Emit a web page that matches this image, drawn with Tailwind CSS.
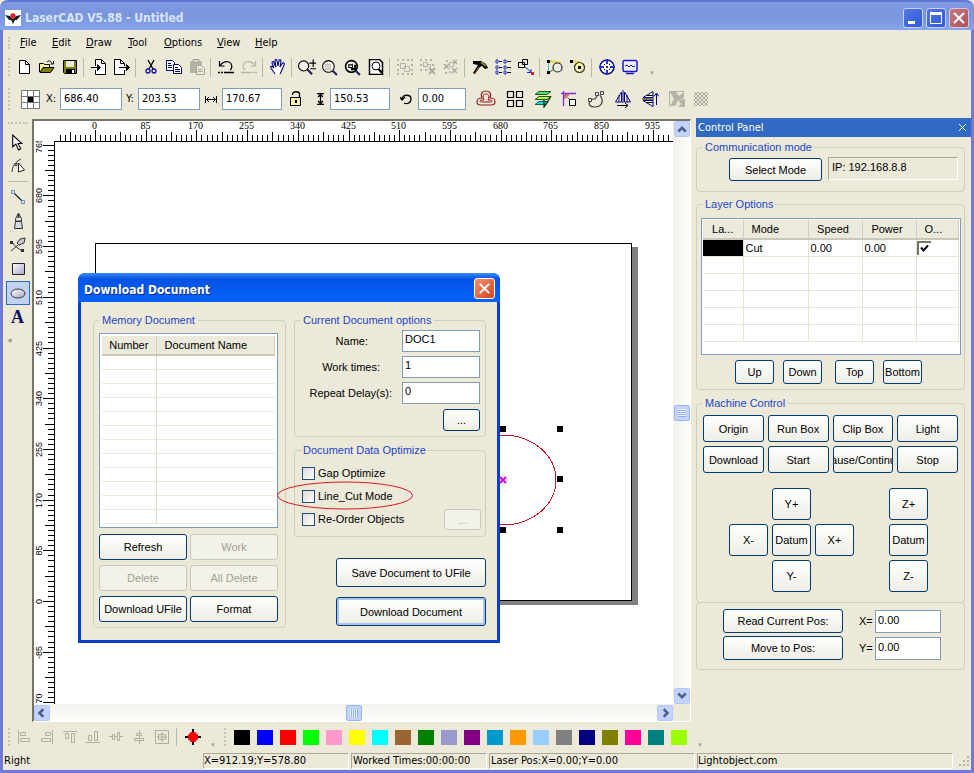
<!DOCTYPE html>
<html lang="en">
  <head>
    <meta charset="UTF-8" />
    <meta name="viewport" content="width=device-width, initial-scale=1.0" />
    <title>LaserCAD V5.88 - Untitled</title>
    <script src="https://cdn.jsdelivr.net/npm/@tailwindcss/browser@4"></script>
  </head>
  <body class="flex min-h-screen flex-col bg-[#ece9d8] font-['Liberation_Sans',sans-serif] text-[11px] leading-[14px] text-black">

    <!-- title bar -->
    <header class="flex h-[30px] shrink-0 items-center gap-1 rounded-t-lg border-t-2 border-[#6276d2] bg-linear-to-b from-[#7d99e2] via-[#7a95dd] to-[#86a6ec] pr-[5px] pl-[5px]">
      <svg class="mt-1 h-4 w-4 bg-white" viewBox="0 0 16 16"><path d="M0 5l5 1 3 3 3-3 5-1-4 5H10l-2 4-2-4H4z" fill="#102020"/><circle cx="8" cy="6" r="2.7" fill="#e32222"/></svg>
      <h1 class="mt-1 flex-1 font-['DejaVu_Sans_Condensed','DejaVu_Sans',sans-serif] text-[12px] font-bold whitespace-nowrap text-[#d8e4f8]">LaserCAD V5.88 - Untitled</h1>
      <div class="mt-1 flex gap-[3px]">
        <button aria-label="Minimize" class="flex h-5 w-5 items-center justify-center rounded-[3px] border border-[#c5d3f5] bg-linear-to-br from-[#5578e2] to-[#2f57d8]"><svg class="h-4 w-4" viewBox="0 0 16 16"><path d="M3 11h7v3H3z" fill="#fff"/></svg></button>
        <button aria-label="Maximize" class="flex h-5 w-5 items-center justify-center rounded-[3px] border border-[#c5d3f5] bg-linear-to-br from-[#5578e2] to-[#2f57d8]"><svg class="h-4 w-4 shrink-0" viewBox="0 0 16 16"><path d="M2 2h12v12H2zM3 5v8h10V5z" fill="#fff" fill-rule="evenodd"/></svg></button>
        <button aria-label="Close" class="flex h-5 w-5 items-center justify-center rounded-[3px] border border-[#d9c5dc] bg-linear-to-br from-[#c47a86] to-[#ae4f55]"><svg class="h-4 w-4" viewBox="0 0 16 16"><path d="M3 3l10 10M13 3L3 13" stroke="#fff" stroke-width="2"/></svg></button>
      </div>
    </header>

    <div class="flex flex-1 flex-col border-x-[3px] border-b-[3px] border-[#7078d8]">
      <!-- menu -->
      <nav class="flex h-6 items-center gap-4 pt-px pl-[5px] font-['DejaVu_Sans_Condensed','DejaVu_Sans',sans-serif] text-[11px]">
        <span class="-mr-[6px] h-3 border-l-2 border-dotted border-[#c5c2b2]"></span>
        <a href="#" class="w-4"><u>F</u>ile</a>
        <a href="#" class="w-[18px]"><u>E</u>dit</a>
        <a href="#" class="w-[26px]"><u>D</u>raw</a>
        <a href="#" class="w-5"><u>T</u>ool</a>
        <a href="#" class="w-[37px]"><u>O</u>ptions</a>
        <a href="#" class="w-[22px]"><u>V</u>iew</a>
        <a href="#"><u>H</u>elp</a>
      </nav>

      <!-- standard toolbar -->
      <div class="flex h-[26px] items-center pl-[5px]">
        <span class="mr-[2px] h-[18px] border-l-2 border-dotted border-[#c5c2b2]"></span>
        <button aria-label="New" class="flex w-[23px] justify-center"><svg class="h-4 w-4" viewBox="0 0 16 16"><path d="M3.500 1.500h6l4 4v9h-10zM9.500 1.500v4h4" fill="#fff" stroke="#000"/></svg></button>
        <button aria-label="Open" class="flex w-[23px] justify-center"><svg class="h-4 w-4" viewBox="0 0 16 16"><path d="M.5 13V4.500h4l1 1h5V8" fill="#ffff90" stroke="#000"/><path d="M1 13.500L4 8.500h11l-3.500 5z" fill="#808000" stroke="#000"/><path d="M8 3c2-2 4-1 5 1.500M14.500 2v3h-3" fill="none" stroke="#000"/></svg></button>
        <button aria-label="Save" class="flex w-[23px] justify-center"><svg class="h-4 w-4" viewBox="0 0 16 16"><path d="M1.500 1.500h13v13h-12l-1-1z" fill="#808000" stroke="#000"/><path d="M4 2h8v6H4z" fill="#ece9d8"/><path d="M4 10h9v4H4z"/><path d="M10 11h2v3h-2z" fill="#fff"/></svg></button>
        <span class="mx-[2px] h-[19px] w-[2px] border-l border-[#b9b7a8]"></span>
        <button aria-label="Import" class="flex w-[23px] justify-center"><svg class="h-4 w-4" viewBox="0 0 16 16"><path d="M4.500 7V.5h6l4 4v11h-10V11M10.500.5v4h4" fill="#fff" stroke="#000"/><path d="M0 8.500h9M6.500 5.500l3 3-3 3z" fill="#000" stroke="#000"/></svg></button>
        <button aria-label="Export" class="flex w-[23px] justify-center"><svg class="h-4 w-4" viewBox="0 0 16 16"><path d="M10.500 11v4.500H.5V.5h6l4 4V7M6.500.5v4h4" fill="#fff" stroke="#000"/><path d="M5 8.500h9M12.500 5.500l3 3-3 3z" fill="#000" stroke="#000"/></svg></button>
        <span class="mx-[2px] h-[19px] w-[2px] border-l border-[#b9b7a8]"></span>
        <button aria-label="Cut" class="flex w-[23px] justify-center"><svg class="h-4 w-4" viewBox="0 0 16 16"><path d="M5 1l5 9M11 1L6 10" stroke="#000" stroke-width="1.300"/><circle cx="5" cy="12" r="2" fill="none" stroke="#1010a0" stroke-width="1.300"/><circle cx="11" cy="12" r="2" fill="none" stroke="#1010a0" stroke-width="1.300"/></svg></button>
        <button aria-label="Copy" class="flex w-[23px] justify-center"><svg class="h-4 w-4" viewBox="0 0 16 16"><path d="M.5 1.500h6l2 2v8h-8z" fill="#fff" stroke="#000080"/><path d="M2 4.500h3M2 6.500h4M2 8.500h4" stroke="#000080"/><path d="M7.500 5.500h5l3 3v6h-8z" fill="#fff" stroke="#000080"/><path d="M9 8.500h3M9 10.500h5M9 12.500h5" stroke="#000080"/></svg></button>
        <button aria-label="Paste" class="flex w-[23px] justify-center"><svg class="h-4 w-4" viewBox="0 0 16 16"><path d="M1 2h12v12H1z" fill="#b5b3a6"/><path d="M4 .5h6v3H4z" fill="#d5d3c6" stroke="#a5a396"/><path d="M7.500 6.500h5l3 3v6h-8z" fill="#eceade" stroke="#a5a396"/><path d="M9 10.500h4M9 12.500h5" stroke="#a5a396"/></svg></button>
        <span class="mx-[2px] h-[19px] w-[2px] border-l border-[#b9b7a8]"></span>
        <button aria-label="Undo" class="flex w-[23px] justify-center"><svg class="h-4 w-4" viewBox="0 0 16 16"><path d="M1.500 2v5h5M2 7c2-4 6-5 9-4s4 6 1 8" fill="none" stroke="#000" stroke-width="1.200"/><path d="M0 13.500h2m1 0h2m1 0h10" stroke="#000" stroke-width="1.500"/></svg></button>
        <button aria-label="Redo" class="flex w-[23px] justify-center"><svg class="h-4 w-4" viewBox="0 0 16 16"><path d="M14.500 2v5h-5M14 7c-2-4-6-5-9-4s-4 6-1 8" fill="none" stroke="#b5b3a6" stroke-width="1.200"/><path d="M0 13.500h10m1 0h2m1 0h2" stroke="#b5b3a6" stroke-width="1.500"/></svg></button>
        <span class="mx-[2px] h-[19px] w-[2px] border-l border-[#b9b7a8]"></span>
        <button aria-label="Pan" class="flex w-[23px] justify-center"><svg class="h-4 w-4" viewBox="0 0 16 16"><path d="M5 15L1 9c-1-2 1-2 2-1l1 1-2-5c0-2 2-2 2 0l2 4-1-6c0-2 2-2 2 0l1 5 1-5c0-2 2-1 2 0l-1 6 2-3c1-2 3-1 2 1l-2 5-2 4" fill="#fff" stroke="#000080" stroke-width="1.100"/></svg></button>
        <span class="mx-[2px] h-[19px] w-[2px] border-l border-[#b9b7a8]"></span>
        <button aria-label="Zoom" class="flex w-[23px] justify-center"><svg class="h-[18px] w-[18px]" viewBox="0 0 16 16"><circle cx="5" cy="7" r="4.500" fill="#f4f2e8" stroke="#000"/><path d="M8.500 10.500l4 4" stroke="#202060" stroke-width="2"/><path d="M10 4.500h6M13.500 1v7M11 9.500h5" stroke="#000"/></svg></button>
        <button aria-label="Zoom selection" class="flex w-[23px] justify-center"><svg class="h-[17px] w-[17px]" viewBox="0 0 16 16"><circle cx="7" cy="7" r="5.500" fill="#f4f2e8" stroke="#000"/><path d="M4 5.500h6M4 7.500h6M4 9.500h6" stroke="#777" stroke-dasharray="1 1"/><path d="M11 11l4 4" stroke="#202060" stroke-width="2"/></svg></button>
        <button aria-label="Zoom all" class="flex w-[23px] justify-center"><svg class="h-[17px] w-[17px]" viewBox="0 0 16 16"><circle cx="7" cy="7" r="5.500" fill="#f4f2e8" stroke="#000" stroke-width="1.500"/><path d="M4.500 8V5.500H8V8z" fill="#fff" stroke="#000"/><path d="M6.500 9.500h4v-4" fill="none" stroke="#000" stroke-width="2"/><path d="M11 11l4 4" stroke="#202060" stroke-width="2"/></svg></button>
        <button aria-label="Zoom page" class="flex w-[23px] justify-center"><svg class="h-4 w-4" viewBox="0 0 16 16"><path d="M1.500.5h10l3 3v12h-13z" fill="#fff" stroke="#000" stroke-width="1.500"/><circle cx="8" cy="7" r="4" fill="none" stroke="#000"/><path d="M10.500 10l3.500 4" stroke="#000" stroke-width="2"/></svg></button>
        <span class="mx-[2px] h-[19px] w-[2px] border-l border-[#b9b7a8]"></span>
        <button aria-label="Group" class="flex w-[23px] justify-center"><svg class="h-4 w-4" viewBox="0 0 16 16"><path d="M3.500 4.500h5v5h-5zM7.500 7.500h5v5h-5z" fill="none" stroke="#b5b3a6"/><path d="M0 0h2v2H0zM5 0h2v2H5zM10 0h2v2h-2zM14 0h2v2h-2zM0 5h2v2H0zM0 10h2v2H0zM0 14h2v2H0zM5 14h2v2H5zM10 14h2v2h-2zM14 14h2v2h-2zM14 5h2v2h-2zM14 10h2v2h-2z" fill="#b5b3a6"/></svg></button>
        <button aria-label="Ungroup" class="flex w-[23px] justify-center"><svg class="h-4 w-4" viewBox="0 0 16 16"><path d="M3.500 3.500h4v4h-4zM6.500 5.500h4v4" fill="none" stroke="#b5b3a6"/><path d="M0 0h2v2H0zM5 0h2v2H5zM10 0h2v2h-2zM0 5h2v2H0zM0 10h2v2H0zM5 10h2v2H5zM12 5h2v2h-2z" fill="#b5b3a6"/><path d="M9 9l6 6M15 9l-6 6" stroke="#aaa89b" stroke-width="2"/></svg></button>
        <button aria-label="Ungroup all" class="flex w-[23px] justify-center"><svg class="h-4 w-4" viewBox="0 0 16 16"><path d="M1 5l5 5M6 5l-5 5M9 9l5 5M14 9l-5 5M10 1l4 4M14 1l-4 4" stroke="#aaa89b" stroke-width="1.400"/><path d="M6.500 3.500h4v4h-4z" fill="none" stroke="#b5b3a6"/><path d="M3 1h2v2H3zM2 13h2v2H2zM6 12h2v2H6z" fill="#b5b3a6"/></svg></button>
        <span class="mx-[2px] h-[19px] w-[2px] border-l border-[#b9b7a8]"></span>
        <button aria-label="Options" class="flex w-[23px] justify-center"><svg class="h-4 w-4" viewBox="0 0 16 16"><path d="M1 2h8l5 3 2 4-3 1-3-3-2 1-5 7-2-1 5-8-5-1z"/><path d="M9 3l5 4" stroke="#8a8a20" stroke-width="2"/><path d="M7 8l-4 6" stroke="#a06040"/></svg></button>
        <button aria-label="Array" class="flex w-[23px] justify-center"><svg class="h-4 w-4" viewBox="0 0 16 16"><path d="M4 2.500h3M12 2.500h4M4 8.500h3M12 8.500h4M4 13.500h3M12 13.500h4" stroke="#000"/><path d="M1 1h2v3H1zM9 1h2v3H9zM1 7h2v3H1zM9 7h2v3H9zM1 12h2v3H1zM9 12h2v3H9z" fill="none" stroke="#2030c0"/></svg></button>
        <button aria-label="Path" class="flex w-[23px] justify-center"><svg class="h-4 w-4" viewBox="0 0 16 16"><path d="M.5 3.500h6v5h-6zM4.500.5h5v5h-5z" fill="#ece9d8" stroke="#000"/><path d="M7 8l6 5M13 10v3.500h-4" fill="none" stroke="#1030d0"/><path d="M13 13h3v3h-3z" fill="#e02020"/></svg></button>
        <span class="mx-[2px] h-[19px] w-[2px] border-l border-[#b9b7a8]"></span>
        <button aria-label="Cut order" class="flex w-[23px] justify-center"><svg class="h-4 w-4" viewBox="0 0 16 16"><path d="M1.500 3v10" stroke="#40c0c0"/><path d="M2 2l6 1 6 1" stroke="#e0d840" stroke-width="2"/><circle cx="10.500" cy="8.500" r="4.500" fill="#f0eedf" stroke="#202040" stroke-width="1.200"/><path d="M0 1h3v3H0zM0 12h3v3H0z"/><path d="M3 13l4-3" stroke="#208020"/></svg></button>
        <button aria-label="Lead point" class="flex w-[23px] justify-center"><svg class="h-4 w-4" viewBox="0 0 16 16"><path d="M1 2l9 1" stroke="#e0d840" stroke-width="2"/><circle cx="9.500" cy="8.500" r="5" fill="#f8f4a0" stroke="#303030" stroke-width="1.200"/><path d="M8 7h3v3H8zM0 1h3v3H0z"/></svg></button>
        <span class="mx-[2px] h-[19px] w-[2px] border-l border-[#b9b7a8]"></span>
        <button aria-label="Center" class="flex w-[23px] justify-center"><svg class="h-4 w-4" viewBox="0 0 16 16"><circle cx="8" cy="8" r="7" fill="#f4f4f0" stroke="#101080" stroke-width="1.500"/><path d="M8 0v5M8 11v5M0 8h5M11 8h5" stroke="#2030e0" stroke-width="2"/><path d="M5 5l1 1M11 5l-1 1M5 11l1-1M11 11l-1-1M7 8h2M8 7v2" stroke="#000"/></svg></button>
        <button aria-label="Monitor" class="flex w-[23px] justify-center"><svg class="h-4 w-4" viewBox="0 0 16 16"><rect x="1" y="1.500" width="14" height="11" rx="1.500" fill="#eef" stroke="#1818d0" stroke-width="1.500"/><path d="M3 7l2-1 2 2 2-2 2 2 2-1" fill="none" stroke="#1010a0"/><path d="M4 14.500h8" stroke="#1818d0" stroke-width="1.500"/></svg></button>
        <span class="mt-3 ml-2 text-[6px] leading-[6px] text-[#a09e90]">▼</span>
      </div>

      <!-- object properties -->
      <div class="flex h-[38px] items-center pl-[5px] font-['DejaVu_Sans_Condensed','DejaVu_Sans',sans-serif]">
        <span class="mr-[11px] h-[22px] border-l-2 border-dotted border-[#c5c2b2]"></span>
        <button aria-label="Anchor" class="mr-[6px]"><svg class="h-[19px] w-[19px]" viewBox="0 0 19 19"><path d="M.5.5h18v18H.5zM6.500.5v18M12.500.5v18M.5 6.500h18M.5 12.500h18" fill="#fff" stroke="#777"/><path d="M7 7h5v5H7z"/></svg></button>
        <label for="px" class="w-[14px]">X:</label>
        <input id="px" value="686.40" class="h-[22px] w-[62px] border border-[#7f9db9] bg-white px-[3px] pb-[2px]" />
        <label for="py" class="ml-1 w-3">Y:</label>
        <input id="py" value="203.53" class="h-[22px] w-[62px] border border-[#7f9db9] bg-white px-[3px] pb-[2px]" />
        <label for="pw" aria-label="Width" class="flex w-[22px] justify-center"><svg class="h-3 w-3" viewBox="0 0 12 12"><path d="M.5 3v7M11.500 3v7M1 6.500h10M4 4L1.500 6.500 4 9M8 4l2.500 2.500L8 9" fill="none" stroke="#000"/></svg></label>
        <input id="pw" value="170.67" class="h-[22px] w-[60px] border border-[#7f9db9] bg-white px-[3px] pb-[2px]" />
        <button aria-label="Lock ratio" class="flex w-7 justify-center"><svg class="h-4 w-4" viewBox="0 0 16 16"><path d="M4.500 4V3c0-3 7-3 7 0v4" fill="none" stroke="#000" stroke-width="1.300"/><path d="M2.500 6.500h10v8h-10z" fill="#fbf0a0" stroke="#000"/><path d="M7 9h2v3H7z"/></svg></button>
        <label for="ph" aria-label="Height" class="flex w-5 justify-center"><svg class="h-3 w-3" viewBox="0 0 12 12"><path d="M3 .5h7M3 11.500h7M6.500 1v10M4 4l2.500-2.500L9 4M4 8l2.500 2.500L9 8" fill="none" stroke="#000" stroke-width="1.300"/></svg></label>
        <input id="ph" value="150.53" class="h-[22px] w-[60px] border border-[#7f9db9] bg-white px-[3px] pb-[2px]" />
        <label for="pr" aria-label="Angle" class="flex w-7 justify-center pl-1"><svg class="h-3 w-3" viewBox="0 0 12 12"><path d="M2 6c0-5 9-5 9 0s-5 5-7 4M0 4l2 3 3-3" fill="none" stroke="#000" stroke-width="1.300"/></svg></label>
        <input id="pr" value="0.00" class="h-[22px] w-12 border border-[#7f9db9] bg-white px-[3px] pb-[2px]" />
        <div class="ml-[6px] flex items-center">
          <button aria-label="Offset" class="flex w-7 justify-center"><svg class="h-[18px] w-5" viewBox="0 0 20 18"><path d="M6 8C4 3 7 1 10 1s6 2 4 7c4 0 5 1 5 4s-2 3-4 3H5c-2 0-4 0-4-3s1-4 5-4z" fill="none" stroke="#902020" stroke-width="1.200"/><path d="M8 10C6 5 8 4 10 4s4 1 2 6c3 0 4 0 4 1s-1 1-2 1H6c-1 0-2 0-2-1s1-1 4-1z" fill="#f6e4da" stroke="#902020"/></svg></button>
          <button aria-label="Array copy" class="flex w-[30px] justify-center"><svg class="h-[18px] w-[18px]" viewBox="0 0 18 18"><path d="M1.500 1.500h6v6h-6zM10.500 1.500h6v6h-6zM1.500 10.500h6v6h-6zM10.500 10.500h6v6h-6z" fill="none" stroke="#000" stroke-width="1.200"/></svg></button>
          <button aria-label="Layers" class="flex w-[26px] justify-center"><svg class="h-[18px] w-[18px]" viewBox="0 0 18 18"><path d="M5 1.500h12l-4 3H1z" fill="#60e060" stroke="#106010"/><path d="M5 6.500h12l-4 3H1z" fill="#d8e850" stroke="#106010"/><path d="M5 11.500h9l-3 3H1z" fill="#20d8d8" stroke="#106060"/><path d="M10 10v7l3-4 4-7" fill="none" stroke="#004000" stroke-width="1.300"/></svg></button>
          <button aria-label="Align origin" class="flex w-[26px] justify-center"><svg class="h-4 w-4" viewBox="0 0 16 16"><path d="M0 2.500h15M2.500 0v15" stroke="#8030d0" stroke-width="1.300"/><path d="M4 4l5 5M4 8V4h4" fill="none" stroke="#c02020"/><path d="M8.500 8.500h6v6h-6z" fill="#fff" stroke="#000"/></svg></button>
          <button aria-label="Smooth" class="flex w-[27px] justify-center"><svg class="h-[18px] w-[18px]" viewBox="0 0 18 18"><path d="M3 11c-2 4 0 6 5 6s8-3 7-8l-2-4M5 9c3 1 5-1 5-5" fill="none" stroke="#444" stroke-width="1.200"/><path d="M1.500 8.500h3v3h-3zM8.500 2.500h3v3h-3zM13.500 1.500h3v3h-3z" fill="#ece9d8" stroke="#444"/></svg></button>
          <button aria-label="Mirror horizontal" class="flex w-7 justify-center"><svg class="h-[18px] w-[18px]" viewBox="0 0 18 18"><path d="M7.500 2v10h-6zM10.500 2v10h6z" fill="#fff" stroke="#000080"/><path d="M9 0v13M5 5v7M13 5v7" stroke="#000080"/><path d="M3 15.500h11M11 13l3 2.500-3 2.500" fill="none" stroke="#000"/></svg></button>
          <button aria-label="Mirror vertical" class="flex w-[26px] justify-center"><svg class="h-[18px] w-[18px]" viewBox="0 0 18 18"><path d="M2 7.500h10v-6zM2 10.500h10v6z" fill="#fff" stroke="#000080"/><path d="M1 9h12M6 5.500h6M6 12.500h6" stroke="#000"/><path d="M15.500 15V4M13 6.500L15.500 3 18 6.500" fill="none" stroke="#000080"/></svg></button>
          <button aria-label="Invert" class="flex w-[27px] justify-center"><svg class="h-4 w-4" viewBox="0 0 16 16"><path d="M.5.5h15M.5.5v15" stroke="#b5b3a6"/><path d="M1 1h6l3 4 5-4v6L9 9l-3 6H1l4-7zM9 9l7-1v8H9l3-3z" fill="#b5b3a6"/></svg></button>
          <button aria-label="Dither" class="flex w-[22px] justify-center"><svg class="h-4 w-4" viewBox="0 0 16 16"><defs><pattern id="chk" width="4" height="4" patternUnits="userSpaceOnUse"><path d="M0 0h2v2H0zM2 2h2v2H2z" fill="#aaa89b"/></pattern></defs><path d="M1 1h14v14H1z" fill="url(#chk)"/></svg></button>
        </div>
      </div>

      <main class="flex flex-1">
        <!-- drawing tools -->
        <aside class="flex w-[29px] shrink-0 flex-col items-center pt-1">
          <span class="mb-[6px] w-5 border-t-2 border-dotted border-[#c5c2b2]"></span>
          <button aria-label="Select" class="flex h-6 w-6 items-center justify-center"><svg class="h-[17px] w-[17px]" viewBox="0 0 16 16"><path d="M3.500 1v11l3-2.500L9 15l2-1-2.500-5H12z" fill="#fff" stroke="#000"/></svg></button>
          <button aria-label="Edit nodes" class="flex h-6 w-6 items-center justify-center"><svg class="h-4 w-4" viewBox="0 0 16 16"><path d="M2 14C2 9 5 4 11 1" fill="none" stroke="#333"/><path d="M5 5.500h2v2H5z" fill="#fff" stroke="#333"/><path d="M8.500 5v9l6-2z" fill="#fff" stroke="#222"/></svg></button>
          <span class="my-[3px] w-5 border-t border-[#b9b7a8]"></span>
          <button aria-label="Line" class="flex h-6 w-6 items-center justify-center"><svg class="h-4 w-4" viewBox="0 0 16 16"><path d="M3 3l10 10" stroke="#222" stroke-width="1.300"/><path d="M1.500 1.500h3v3h-3zM11.500 11.500h3v3h-3z" fill="#d8ecf4" stroke="#6a90a8"/></svg></button>
          <button aria-label="Pen" class="flex h-6 w-6 items-center justify-center"><svg class="h-4 w-4" viewBox="0 0 16 16"><path d="M8.500 0l3 6v2h-6V6z" fill="#eee" stroke="#333"/><path d="M5.500 8.500h6l1 7h-8z" fill="#d8d8e4" stroke="#333"/><path d="M8.500 1v4" stroke="#333" stroke-width="2"/></svg></button>
          <button aria-label="Curve" class="flex h-6 w-6 items-center justify-center"><svg class="h-4 w-4" viewBox="0 0 16 16"><path d="M2 5c3 5 6 6 10 9M1 14l7-6" fill="none" stroke="#333"/><path d="M7 6l3-4 5-1-1 5-5 2z" fill="#c8c8d0" stroke="#333"/><path d="M0 4h3v3H0zM11 12h3v3h-3z" fill="#333"/></svg></button>
          <button aria-label="Rectangle" class="flex h-6 w-6 items-center justify-center"><svg class="h-4 w-4" viewBox="0 0 16 16"><defs><linearGradient id="lav" x2="1" y2="1"><stop stop-color="#fff"/><stop offset="1" stop-color="#a8a4c8"/></linearGradient></defs><path d="M2.500 2.500h12v11h-12z" fill="url(#lav)" stroke="#222"/></svg></button>
          <button aria-label="Ellipse" class="flex h-6 w-6 items-center justify-center border border-[#316ac5] bg-[#c1d2ee]"><svg class="h-4 w-4" viewBox="0 0 16 16"><ellipse cx="8" cy="8.500" rx="7" ry="4.500" fill="url(#lav)" stroke="#333"/></svg></button>
          <button aria-label="Text" class="h-6 w-6 font-['Liberation_Serif',serif] text-[18px] font-bold text-[#101060]">A</button>
          <span class="mt-2 mr-4 text-[6px] leading-[6px] text-[#a09e90]">◀</span>
        </aside>

        <!-- work area -->
        <section class="relative mt-px grid min-w-0 flex-1 grid-cols-[1fr_17px] grid-rows-[1fr_17px] border-t-2 border-r border-b border-l-2 border-t-[#77756a] border-r-white border-b-white border-l-[#77756a] bg-white">
          <div class="relative overflow-hidden">
            <svg class="absolute inset-0 h-full w-full" shape-rendering="crispEdges">
              <path d="M66 126h538v358H66z" fill="#808080"/>
              <path d="M61.500 122.500h536v357h-536z" fill="#fff" stroke="#000"/>
              <ellipse cx="469" cy="359" rx="53" ry="45" fill="none" stroke="#c8102e"/>
              <path d="M466 305h6v6h-6zM523 305h6v6h-6zM523 355h6v6h-6zM523 406h6v6h-6zM466 406h6v6h-6z"/>
              <path d="M466 356l6 6M472 356l-6 6" stroke="#e000e0" stroke-width="2" shape-rendering="auto"/>
            </svg>
            <svg id="rulerX" class="absolute top-0 left-[21px] h-[21px] w-full font-['Liberation_Serif',serif] text-[10px]"></svg>
            <svg id="rulerY" class="absolute top-[20px] left-0 h-full w-[21px] text-[9px]"></svg>
          </div>
          <!-- vertical scrollbar -->
          <div class="flex flex-col items-center bg-linear-to-r from-[#f2f1ea] to-[#fefefb]">
            <button aria-label="Scroll up" class="flex h-4 w-4 items-center justify-center rounded-[2px] border border-[#b4c8f6] bg-[#c3d3fd]"><svg class="h-[10px] w-[10px]" viewBox="0 0 8 8"><path d="M1 6l3-3 3 3" fill="none" stroke="#4d6185" stroke-width="2"/></svg></button>
            <span class="flex-1"></span>
            <span class="flex h-4 w-4 items-center justify-center rounded-[2px] border border-[#98b4ee] bg-[#c3d3fd]"><svg class="h-2 w-2" viewBox="0 0 8 8"><path d="M0 .5h8M0 2.500h8M0 4.500h8M0 6.500h8" stroke="#eef4fe"/><path d="M0 1.500h8M0 3.500h8M0 5.500h8M0 7.500h8" stroke="#8cb0f8"/></svg></span>
            <span class="flex-1"></span>
            <button aria-label="Scroll down" class="flex h-4 w-4 items-center justify-center rounded-[2px] border border-[#b4c8f6] bg-[#c3d3fd]"><svg class="h-[10px] w-[10px]" viewBox="0 0 8 8"><path d="M1 2l3 3 3-3" fill="none" stroke="#4d6185" stroke-width="2"/></svg></button>
          </div>
          <!-- horizontal scrollbar -->
          <div class="flex items-center bg-linear-to-b from-[#f2f1ea] to-[#fefefb]">
            <button aria-label="Scroll left" class="flex h-4 w-4 items-center justify-center rounded-[2px] border border-[#b4c8f6] bg-[#c3d3fd]"><svg class="h-[10px] w-[10px]" viewBox="0 0 8 8"><path d="M5 1L2 4l3 3" fill="none" stroke="#4d6185" stroke-width="2"/></svg></button>
            <span class="flex-1"></span>
            <span class="flex h-4 w-4 items-center justify-center rounded-[2px] border border-[#98b4ee] bg-[#c3d3fd]"><svg class="h-2 w-2" viewBox="0 0 8 8"><path d="M.5 0v8M2.500 0v8M4.500 0v8M6.500 0v8" stroke="#eef4fe"/><path d="M1.500 0v8M3.500 0v8M5.500 0v8M7.500 0v8" stroke="#8cb0f8"/></svg></span>
            <span class="flex-1"></span>
            <button aria-label="Scroll right" class="flex h-4 w-4 items-center justify-center rounded-[2px] border border-[#b4c8f6] bg-[#c3d3fd]"><svg class="h-[10px] w-[10px]" viewBox="0 0 8 8"><path d="M3 1l3 3-3 3" fill="none" stroke="#4d6185" stroke-width="2"/></svg></button>
          </div>
          <div class="bg-[#ece9d8]"></div>

          <!-- Download Document dialog -->
          <div role="dialog" aria-labelledby="dlgTitle" class="absolute top-[152px] left-[44px] w-[422px] rounded-t-[7px] bg-[#0a3fce] px-[3px] pb-[3px]">
            <div class="-mx-[3px] flex h-[29px] items-center justify-between rounded-t-[7px] bg-linear-to-b from-[#3a8df8] via-[#0453e4] via-20% to-[#0562fb] pr-[5px] pl-[6px]">
              <h2 id="dlgTitle" class="mt-1 font-['DejaVu_Sans_Condensed','DejaVu_Sans',sans-serif] text-[12px] font-bold text-white [text-shadow:1px_1px_#0a2a8a]">Download Document</h2>
              <button aria-label="Close dialog" class="mt-[2px] flex h-[21px] w-[21px] items-center justify-center rounded-[3px] border border-white bg-linear-to-br from-[#f0926e] to-[#d0401a]"><svg class="h-[15px] w-[15px]" viewBox="0 0 16 16"><path d="M3 3l10 10M13 3L3 13" stroke="#fff" stroke-width="2"/></svg></button>
            </div>
            <div class="flex h-[338px] gap-2 bg-[#ece9d8] pt-[11px] pr-[11px] pb-3 pl-3">
              <fieldset class="w-[193px] rounded border border-[#d0cdbd] pr-[7px] pl-[5px]">
                <legend class="px-[3px] text-[#1a46c8]">Memory Document</legend>
                <div class="mt-[6px] h-[195px] border border-[#7f9db9] bg-white p-[2px] pb-0">
                  <table class="w-full table-fixed border-collapse">
                    <thead><tr class="h-[19px] border-b-2 border-[#cbc7b8] bg-[#ebeadb]">
                      <th class="w-[54px] border-r border-[#d0cdbd] text-center font-normal">Number</th>
                      <th class="border-r border-[#d0cdbd] pl-2 text-left font-normal">Document Name</th>
                    </tr></thead>
                    <tbody id="docRows"></tbody>
                  </table>
                </div>
                <div class="mt-[6px] grid grid-cols-2 gap-x-[3px] gap-y-[5px]">
                  <button class="h-[26px] rounded-[3px] border border-[#003c74] bg-linear-to-b from-white to-[#eeede5]">Refresh</button>
                  <button disabled class="h-[26px] rounded-[3px] border border-[#c9c7ba] bg-[#f3f2e9] text-[#a1a192]">Work</button>
                  <button disabled class="h-[26px] rounded-[3px] border border-[#c9c7ba] bg-[#f3f2e9] text-[#a1a192]">Delete</button>
                  <button disabled class="h-[26px] rounded-[3px] border border-[#c9c7ba] bg-[#f3f2e9] text-[#a1a192]">All Delete</button>
                  <button class="h-[26px] rounded-[3px] border border-[#003c74] bg-linear-to-b from-white to-[#eeede5] whitespace-nowrap">Download UFile</button>
                  <button class="h-[26px] rounded-[3px] border border-[#003c74] bg-linear-to-b from-white to-[#eeede5]">Format</button>
                </div>
              </fieldset>

              <div class="flex w-[192px] shrink-0 flex-col">
                <fieldset class="h-[124px] rounded border border-[#d0cdbd] pr-[5px] pl-[5px]">
                  <legend class="px-[3px] text-[#1a46c8]">Current Document options</legend>
                  <div class="mt-[3px] grid grid-cols-[1fr_78px] items-center gap-y-1">
                    <label for="dn" class="pr-[34px] text-right">Name:</label>
                    <input id="dn" value="DOC1" class="h-[22px] w-full border border-[#7f9db9] bg-white px-[2px] pb-1" />
                    <label for="dw" class="pr-[22px] text-right">Work times:</label>
                    <input id="dw" value="1" class="h-[22px] w-full border border-[#7f9db9] bg-white px-[2px] pb-1" />
                    <label for="dr" class="pr-[10px] text-right whitespace-nowrap">Repeat Delay(s):</label>
                    <input id="dr" value="0" class="h-[22px] w-full border border-[#7f9db9] bg-white px-[2px] pb-1" />
                  </div>
                  <button class="mt-[5px] ml-auto block h-[22px] w-[37px] rounded-[3px] border border-[#003c74] bg-linear-to-b from-white to-[#eeede5]">...</button>
                </fieldset>
                <fieldset class="mt-[6px] h-[94px] rounded border border-[#d0cdbd] pr-1 pl-[7px]">
                  <legend class="px-px text-[#1a46c8]">Document Data Optimize</legend>
                  <div class="mt-[9px] flex items-end justify-between">
                    <div class="space-y-[9px]">
                      <div class="flex h-[14px] items-center gap-[3px]"><input type="checkbox" id="gap" class="h-[13px] w-[13px] appearance-none border border-[#1c5180] bg-linear-to-br from-[#dcdcd7] to-white" /><label for="gap">Gap Optimize</label></div>
                      <div class="flex h-[14px] items-center gap-[3px]"><input type="checkbox" id="line" class="h-[13px] w-[13px] appearance-none border border-[#1c5180] bg-linear-to-br from-[#dcdcd7] to-white" /><label for="line">Line_Cut Mode</label></div>
                      <div class="flex h-[14px] items-center gap-[3px]"><input type="checkbox" id="order" class="h-[13px] w-[13px] appearance-none border border-[#1c5180] bg-linear-to-br from-[#dcdcd7] to-white" /><label for="order">Re-Order Objects</label></div>
                    </div>
                    <button disabled class="-mb-1 h-[21px] w-[37px] rounded-[3px] border border-[#c9c7ba] bg-[#f3f2e9] text-[#a1a192]">...</button>
                  </div>
                </fieldset>
                <div class="mt-[21px] ml-auto flex w-[150px] flex-col gap-[10px]">
                  <button class="h-[29px] rounded-[3px] border border-[#003c74] bg-linear-to-b from-white to-[#eeede5]">Save Document to UFile</button>
                  <button class="h-[29px] rounded-[3px] border border-[#003c74] bg-linear-to-b from-white to-[#eeede5] inset-ring-2 inset-ring-[#a8c4f0]">Download Document</button>
                </div>
              </div>
            </div>
            <svg class="pointer-events-none absolute top-[208px] left-[199px] h-[29px] w-[138px]" viewBox="0 0 138 29"><ellipse cx="68" cy="14.500" rx="67.500" ry="13.500" fill="none" stroke="#d01c28"/></svg>
          </div>
        </section>

        <!-- control panel -->
        <section class="ml-[5px] flex w-[275px] shrink-0 flex-col">
          <div class="flex h-[19px] items-center justify-between bg-[#316ac5] px-[2px] font-['DejaVu_Sans_Condensed','DejaVu_Sans',sans-serif] text-white">
            <h2>Control Panel</h2>
            <button aria-label="Close panel" class="mr-[2px]"><svg class="h-[9px] w-[9px]" viewBox="0 0 9 9"><path d="M1 1l7 7M8 1L1 8" stroke="#fff"/></svg></button>
          </div>
          <div class="flex flex-col pt-[3px] pr-[6px]">
            <fieldset class="flex h-[52px] items-start rounded border border-[#d0cdbd] pl-8">
              <legend class="-ml-[26px] px-[2px] text-[#1a46c8]">Communication mode</legend>
              <button class="mt-1 h-[23px] w-[93px] rounded-[3px] border border-[#003c74] bg-linear-to-b from-white to-[#eeede5]">Select Mode</button>
              <p class="mt-[3px] ml-[6px] h-[23px] w-[130px] border border-[#aca899] border-r-white border-b-white pt-[2px] pl-[3px]">IP: 192.168.8.8</p>
            </fieldset>
            <fieldset class="mt-[5px] h-[193px] rounded border border-[#d0cdbd] pr-[3px] pl-1">
              <legend class="ml-[2px] px-[2px] text-[#1a46c8]">Layer Options</legend>
              <div class="mt-[7px] h-[137px] border border-[#7f9db9] bg-white p-px pb-0">
                <table class="w-full table-fixed border-collapse">
                  <thead><tr class="h-[19px] border-b-2 border-[#cbc7b8] bg-[#ebeadb]">
                    <th class="w-10 border-r border-[#d0cdbd] font-normal">La...</th>
                    <th class="w-[65px] border-r border-[#d0cdbd] pl-2 text-left font-normal">Mode</th>
                    <th class="w-[54px] border-r border-[#d0cdbd] pr-1 font-normal">Speed</th>
                    <th class="w-[54px] border-r border-[#d0cdbd] pr-1 font-normal">Power</th>
                    <th class="border-r border-[#d0cdbd] pl-2 text-left font-normal">O...</th>
                  </tr></thead>
                  <tbody id="layerRows">
                    <tr class="h-[17px] border-b border-[#e6e3d2]">
                      <td class="border-r border-[#e6e3d2] bg-black"></td>
                      <td class="border-r border-[#e6e3d2] pl-[2px]">Cut</td>
                      <td class="border-r border-[#e6e3d2] pl-[2px]">0.00</td>
                      <td class="border-r border-[#e6e3d2] pl-[2px]">0.00</td>
                      <td class="border-r border-[#e6e3d2]"><label class="relative block h-[14px] w-[14px]"><input type="checkbox" checked aria-label="Output" class="block h-[14px] w-[14px] appearance-none border-t-2 border-l-2 border-[#77756a] bg-white" /><svg class="pointer-events-none absolute top-[3px] left-[3px] h-[9px] w-[9px]" viewBox="0 0 9 9"><path d="M1 3.500l2.500 3L8 1.500" fill="none" stroke="#000" stroke-width="2"/></svg></label></td>
                    </tr>
                  </tbody>
                </table>
              </div>
              <div class="mt-[5px] flex pl-[34px]">
                <button class="h-6 w-[39px] rounded-[3px] border border-[#003c74] bg-linear-to-b from-white to-[#eeede5]">Up</button>
                <button class="ml-[9px] h-6 w-[39px] rounded-[3px] border border-[#003c74] bg-linear-to-b from-white to-[#eeede5]">Down</button>
                <button class="ml-[13px] h-6 w-[39px] rounded-[3px] border border-[#003c74] bg-linear-to-b from-white to-[#eeede5]">Top</button>
                <button class="ml-[9px] h-6 w-[39px] rounded-[3px] border border-[#003c74] bg-linear-to-b from-white to-[#eeede5]">Bottom</button>
              </div>
            </fieldset>
            <fieldset class="mt-[6px] h-[207px] rounded border border-[#d0cdbd] pr-[6px] pl-[6px]">
              <legend class="px-[2px] text-[#1a46c8]">Machine Control</legend>
              <div class="mt-[5px] grid grid-cols-4 gap-1">
                <button class="h-[27px] rounded-[3px] border border-[#003c74] bg-linear-to-b from-white to-[#eeede5]">Origin</button>
                <button class="h-[27px] rounded-[3px] border border-[#003c74] bg-linear-to-b from-white to-[#eeede5]">Run Box</button>
                <button class="h-[27px] rounded-[3px] border border-[#003c74] bg-linear-to-b from-white to-[#eeede5]">Clip Box</button>
                <button class="h-[27px] rounded-[3px] border border-[#003c74] bg-linear-to-b from-white to-[#eeede5]">Light</button>
                <button class="h-[27px] rounded-[3px] border border-[#003c74] bg-linear-to-b from-white to-[#eeede5]">Download</button>
                <button class="h-[27px] rounded-[3px] border border-[#003c74] bg-linear-to-b from-white to-[#eeede5]">Start</button>
                <button class="flex h-[27px] min-w-0 items-center justify-center overflow-hidden rounded-[3px] border border-[#003c74] bg-linear-to-b from-white to-[#eeede5]"><span class="whitespace-nowrap">Pause/Continue</span></button>
                <button class="h-[27px] rounded-[3px] border border-[#003c74] bg-linear-to-b from-white to-[#eeede5]">Stop</button>
              </div>
              <div class="mt-[15px] flex justify-between pr-[30px] pl-[26px]">
                <div class="grid grid-cols-3 grid-rows-3 gap-1">
                  <button class="col-start-2 h-8 w-[39px] rounded-[3px] border border-[#003c74] bg-linear-to-b from-white to-[#eeede5]">Y+</button>
                  <button class="col-start-1 row-start-2 h-8 w-[39px] rounded-[3px] border border-[#003c74] bg-linear-to-b from-white to-[#eeede5]">X-</button>
                  <button class="row-start-2 h-8 w-[39px] rounded-[3px] border border-[#003c74] bg-linear-to-b from-white to-[#eeede5]">Datum</button>
                  <button class="row-start-2 h-8 w-[39px] rounded-[3px] border border-[#003c74] bg-linear-to-b from-white to-[#eeede5]">X+</button>
                  <button class="col-start-2 row-start-3 h-8 w-[39px] rounded-[3px] border border-[#003c74] bg-linear-to-b from-white to-[#eeede5]">Y-</button>
                </div>
                <div class="flex flex-col gap-1">
                  <button class="h-8 w-[39px] rounded-[3px] border border-[#003c74] bg-linear-to-b from-white to-[#eeede5]">Z+</button>
                  <button class="h-8 w-[39px] rounded-[3px] border border-[#003c74] bg-linear-to-b from-white to-[#eeede5]">Datum</button>
                  <button class="h-8 w-[39px] rounded-[3px] border border-[#003c74] bg-linear-to-b from-white to-[#eeede5]">Z-</button>
                </div>
              </div>
            </fieldset>
            <div class="-mt-px grid h-[68px] grid-cols-[120px_16px_66px] content-start items-center gap-x-4 gap-y-[3px] rounded border border-[#d0cdbd] pt-[6px] pl-[26px]">
              <button class="h-6 rounded-[3px] border border-[#003c74] bg-linear-to-b from-white to-[#eeede5]">Read Current Pos:</button>
              <label for="cx">X=</label>
              <input id="cx" value="0.00" class="-ml-4 h-[23px] w-[66px] border border-[#7f9db9] bg-white px-[2px] pb-[2px]" />
              <button class="h-6 rounded-[3px] border border-[#003c74] bg-linear-to-b from-white to-[#eeede5]">Move to Pos:</button>
              <label for="cy">Y=</label>
              <input id="cy" value="0.00" class="-ml-4 h-[23px] w-[66px] border border-[#7f9db9] bg-white px-[2px] pb-[2px]" />
            </div>
          </div>
        </section>
      </main>

      <!-- align tools and layer colours -->
      <div class="flex h-[30px] items-center pl-[5px]">
        <span class="mr-[2px] h-[18px] border-l-2 border-dotted border-[#c5c2b2]"></span>
        <button aria-label="Align left" class="flex w-[23px] justify-center"><svg class="h-[14px] w-[14px]" viewBox="0 0 14 14"><path d="M1.500 0v14M3.500 2.500h5v3h-5zM3.500 8.500h9v3h-9z" fill="none" stroke="#b0ae9f"/></svg></button>
        <button aria-label="Align right" class="flex w-[23px] justify-center"><svg class="h-[14px] w-[14px]" viewBox="0 0 14 14"><path d="M12.500 0v14M5.500 2.500h5v3h-5zM1.500 8.500h9v3h-9z" fill="none" stroke="#b0ae9f"/></svg></button>
        <button aria-label="Align top" class="flex w-[23px] justify-center"><svg class="h-[14px] w-[14px]" viewBox="0 0 14 14"><path d="M0 1.500h14M2.500 3.500h3v5h-3zM8.500 3.500h3v9h-3z" fill="none" stroke="#b0ae9f"/></svg></button>
        <button aria-label="Align bottom" class="flex w-[23px] justify-center"><svg class="h-[14px] w-[14px]" viewBox="0 0 14 14"><path d="M0 12.500h14M2.500 5.500h3v5h-3zM8.500 1.500h3v9h-3z" fill="none" stroke="#b0ae9f"/></svg></button>
        <button aria-label="Center vertically" class="flex w-[23px] justify-center"><svg class="h-[14px] w-[14px]" viewBox="0 0 14 14"><path d="M0 6.500h3M6 6.500h2M11 6.500h3M3.500 4.500h2v5h-2zM8.500 2.500h2v8h-2z" fill="none" stroke="#b0ae9f"/></svg></button>
        <button aria-label="Center horizontally" class="flex w-[23px] justify-center"><svg class="h-[14px] w-[14px]" viewBox="0 0 14 14"><path d="M7.500 0v3M7.500 6v2M7.500 11v3M4.500 3.500h5v2h-5zM2.500 8.500h9v2h-9z" fill="none" stroke="#b0ae9f"/></svg></button>
        <button aria-label="Center on page" class="flex w-[23px] justify-center"><svg class="h-[14px] w-[14px]" viewBox="0 0 14 14"><path d="M.5.5h13v13H.5zM3.500 4.500h7v5h-7zM7 2v10M2 7h10" fill="none" stroke="#b0ae9f"/></svg></button>
        <span class="mx-[3px] h-[18px] w-[2px] border-l border-[#b9b7a8]"></span>
        <button aria-label="Laser position" class="flex w-[23px] justify-center"><svg class="h-4 w-4" viewBox="0 0 16 16"><path d="M8 0v16M0 8h16" stroke="#000" stroke-width="2"/><path d="M6 3h4l3 3v4l-3 3H6l-3-3V6z" fill="#f00"/></svg></button>
        <span class="mt-4 ml-[6px] text-[6px] leading-[6px] text-[#a09e90]">▼</span>
        <span class="mr-2 ml-2 h-[18px] border-l-2 border-dotted border-[#c5c2b2]"></span>
        <div class="flex gap-[7px]">
          <button aria-label="Black" class="h-[15px] w-4 bg-black"></button>
          <button aria-label="Blue" class="h-[15px] w-4 bg-[#0000ff]"></button>
          <button aria-label="Red" class="h-[15px] w-4 bg-[#ff0000]"></button>
          <button aria-label="Lime" class="h-[15px] w-4 bg-[#00ff00]"></button>
          <button aria-label="Pink" class="h-[15px] w-4 bg-[#ff99cc]"></button>
          <button aria-label="Yellow" class="h-[15px] w-4 bg-[#ffff00]"></button>
          <button aria-label="Cyan" class="h-[15px] w-4 bg-[#00ffff]"></button>
          <button aria-label="Brown" class="h-[15px] w-4 bg-[#996633]"></button>
          <button aria-label="Green" class="h-[15px] w-4 bg-[#008000]"></button>
          <button aria-label="Lavender" class="h-[15px] w-4 bg-[#9999cc]"></button>
          <button aria-label="Purple" class="h-[15px] w-4 bg-[#800080]"></button>
          <button aria-label="Cerulean" class="h-[15px] w-4 bg-[#0099cc]"></button>
          <button aria-label="Orange" class="h-[15px] w-4 bg-[#ff9900]"></button>
          <button aria-label="Sky" class="h-[15px] w-4 bg-[#99ccff]"></button>
          <button aria-label="Gray" class="h-[15px] w-4 bg-[#808080]"></button>
          <button aria-label="Navy" class="h-[15px] w-4 bg-[#000080]"></button>
          <button aria-label="Olive" class="h-[15px] w-4 bg-[#808000]"></button>
          <button aria-label="Magenta" class="h-[15px] w-4 bg-[#ff0099]"></button>
          <button aria-label="Teal" class="h-[15px] w-4 bg-[#008080]"></button>
          <button aria-label="Chartreuse" class="h-[15px] w-4 bg-[#99ff00]"></button>
        </div>
        <span class="mt-4 ml-[10px] text-[6px] leading-[6px] text-[#a09e90]">▼</span>
      </div>

      <!-- status bar -->
      <footer class="flex h-[18px] items-center gap-[2px] font-['DejaVu_Sans_Condensed','DejaVu_Sans',sans-serif] whitespace-nowrap">
        <span class="w-[198px] pl-px">Right</span>
        <span class="h-4 w-[146px] border border-[#aca899] border-r-white border-b-white">X=912.19;Y=578.80</span>
        <span class="h-4 w-[136px] border border-[#aca899] border-r-white border-b-white pl-px">Worked Times:00:00:00</span>
        <span class="h-4 w-[206px] border border-[#aca899] border-r-white border-b-white pl-px">Laser Pos:X=0.00;Y=0.00</span>
        <span class="h-4 flex-1 border border-[#aca899] border-r-white border-b-white">Lightobject.com</span>
        <svg class="h-4 w-4" viewBox="0 0 16 16"><path d="M12 3h2v2h-2zM8 7h2v2H8zM12 7h2v2h-2zM4 11h2v2H4zM8 11h2v2H8zM12 11h2v2h-2z" fill="#b8b5a5"/></svg>
      </footer>
    </div>

    <script>
      // one major tick per 85 mm, ten minor ticks between majors
      const MAJOR = 50.7;

      function tickLength(i) {
        if (i % 10 === 0) return 11;
        return i % 5 === 0 ? 9 : 6;
      }

      let x = '<path d="M0 20.500H619" stroke="#000"/>';
      for (let i = -7; i <= 113; i++) {
        const p = Math.round(40 + (i * MAJOR) / 10) + 0.5;
        x += `<path d="M${p} ${20 - tickLength(i)}V20" stroke="#000"/>`;
        if (i % 10 === 0) x += `<text x="${p - 1}" y="8" text-anchor="middle">${i * 8.5}</text>`;
      }
      document.getElementById("rulerX").innerHTML = x;

      let y = '<path d="M20.500 0V564" stroke="#000"/>';
      for (let i = 90; i >= -21; i--) {
        const p = Math.round(460 - (i * MAJOR) / 10) + 0.5;
        if (p < 0 || p > 564) continue;
        y += `<path d="M${20 - tickLength(i)} ${p}H20" stroke="#000"/>`;
        if (i % 10 === 0) y += `<text transform="translate(8 ${p}) rotate(-90)" text-anchor="middle">${i * 8.5}</text>`;
      }
      document.getElementById("rulerY").innerHTML = y;

      const docRow = '<tr class="h-[14px] border-b border-[#ece9d8]"><td class="border-r border-[#e0ddcc]"></td><td></td></tr>';
      document.getElementById("docRows").innerHTML = docRow.repeat(12);

      const cell = '<td class="border-r border-[#e6e3d2]"></td>';
      document.getElementById("layerRows").innerHTML += ('<tr class="h-[17px] border-b border-[#e6e3d2]">' + cell.repeat(5) + "</tr>").repeat(5);
    </script>
  </body>
</html>
